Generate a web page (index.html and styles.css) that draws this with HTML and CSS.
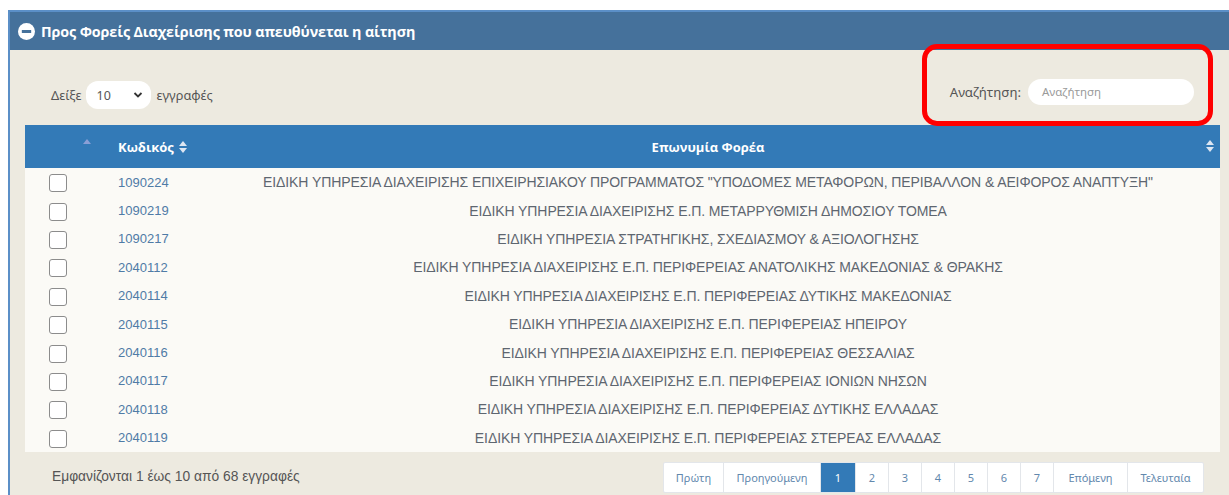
FILE: index.html
```html
<!DOCTYPE html>
<html lang="el">
<head>
<meta charset="utf-8">
<title>Φορείς Διαχείρισης</title>
<link rel="stylesheet" href="styles.css">
</head>
<body>
<section class="panel">
  <header class="panel-head">
    <svg class="collapse-icon" width="17" height="17" viewBox="0 0 16 16" aria-hidden="true">
      <circle cx="8" cy="8" r="8" fill="#ffffff"/>
      <rect x="3.6" y="6.6" width="8.8" height="2.8" fill="#45719b"/>
    </svg>
    <span class="panel-title">Προς Φορείς Διαχείρισης που απευθύνεται η αίτηση</span>
  </header>

  <div class="panel-body">
    <div class="controls">
      <label class="length">Δείξε
        <span class="select">10
          <svg width="10" height="8" viewBox="0 0 10 8" aria-hidden="true"><path d="M1.5 2 L5 5.5 L8.5 2" fill="none" stroke="#333" stroke-width="1.8"/></svg>
        </span>
        εγγραφές</label>
      <label class="search">Αναζήτηση:
        <span class="search-input">Αναζήτηση</span>
      </label>
    </div>

    <table class="grid">
      <thead>
        <tr>
          <th class="col-check"><span class="sort-up"></span></th>
          <th class="col-code">Κωδικός <span class="sort-both"></span></th>
          <th class="col-name">Επωνυμία Φορέα <span class="sort-both sort-right"></span></th>
        </tr>
      </thead>
      <tbody>
        <tr><td class="col-check"><span class="box"></span></td><td class="col-code">1090224</td><td class="col-name">ΕΙΔΙΚΗ ΥΠΗΡΕΣΙΑ ΔΙΑΧΕΙΡΙΣΗΣ ΕΠΙΧΕΙΡΗΣΙΑΚΟΥ ΠΡΟΓΡΑΜΜΑΤΟΣ "ΥΠΟΔΟΜΕΣ ΜΕΤΑΦΟΡΩΝ, ΠΕΡΙΒΑΛΛΟΝ &amp; ΑΕΙΦΟΡΟΣ ΑΝΑΠΤΥΞΗ"</td></tr>
        <tr><td class="col-check"><span class="box"></span></td><td class="col-code">1090219</td><td class="col-name">ΕΙΔΙΚΗ ΥΠΗΡΕΣΙΑ ΔΙΑΧΕΙΡΙΣΗΣ Ε.Π. ΜΕΤΑΡΡΥΘΜΙΣΗ ΔΗΜΟΣΙΟΥ ΤΟΜΕΑ</td></tr>
        <tr><td class="col-check"><span class="box"></span></td><td class="col-code">1090217</td><td class="col-name">ΕΙΔΙΚΗ ΥΠΗΡΕΣΙΑ ΣΤΡΑΤΗΓΙΚΗΣ, ΣΧΕΔΙΑΣΜΟΥ &amp; ΑΞΙΟΛΟΓΗΣΗΣ</td></tr>
        <tr><td class="col-check"><span class="box"></span></td><td class="col-code">2040112</td><td class="col-name">ΕΙΔΙΚΗ ΥΠΗΡΕΣΙΑ ΔΙΑΧΕΙΡΙΣΗΣ Ε.Π. ΠΕΡΙΦΕΡΕΙΑΣ ΑΝΑΤΟΛΙΚΗΣ ΜΑΚΕΔΟΝΙΑΣ &amp; ΘΡΑΚΗΣ</td></tr>
        <tr><td class="col-check"><span class="box"></span></td><td class="col-code">2040114</td><td class="col-name">ΕΙΔΙΚΗ ΥΠΗΡΕΣΙΑ ΔΙΑΧΕΙΡΙΣΗΣ Ε.Π. ΠΕΡΙΦΕΡΕΙΑΣ ΔΥΤΙΚΗΣ ΜΑΚΕΔΟΝΙΑΣ</td></tr>
        <tr><td class="col-check"><span class="box"></span></td><td class="col-code">2040115</td><td class="col-name">ΕΙΔΙΚΗ ΥΠΗΡΕΣΙΑ ΔΙΑΧΕΙΡΙΣΗΣ Ε.Π. ΠΕΡΙΦΕΡΕΙΑΣ ΗΠΕΙΡΟΥ</td></tr>
        <tr><td class="col-check"><span class="box"></span></td><td class="col-code">2040116</td><td class="col-name">ΕΙΔΙΚΗ ΥΠΗΡΕΣΙΑ ΔΙΑΧΕΙΡΙΣΗΣ Ε.Π. ΠΕΡΙΦΕΡΕΙΑΣ ΘΕΣΣΑΛΙΑΣ</td></tr>
        <tr><td class="col-check"><span class="box"></span></td><td class="col-code">2040117</td><td class="col-name">ΕΙΔΙΚΗ ΥΠΗΡΕΣΙΑ ΔΙΑΧΕΙΡΙΣΗΣ Ε.Π. ΠΕΡΙΦΕΡΕΙΑΣ ΙΟΝΙΩΝ ΝΗΣΩΝ</td></tr>
        <tr><td class="col-check"><span class="box"></span></td><td class="col-code">2040118</td><td class="col-name">ΕΙΔΙΚΗ ΥΠΗΡΕΣΙΑ ΔΙΑΧΕΙΡΙΣΗΣ Ε.Π. ΠΕΡΙΦΕΡΕΙΑΣ ΔΥΤΙΚΗΣ ΕΛΛΑΔΑΣ</td></tr>
        <tr><td class="col-check"><span class="box"></span></td><td class="col-code">2040119</td><td class="col-name">ΕΙΔΙΚΗ ΥΠΗΡΕΣΙΑ ΔΙΑΧΕΙΡΙΣΗΣ Ε.Π. ΠΕΡΙΦΕΡΕΙΑΣ ΣΤΕΡΕΑΣ ΕΛΛΑΔΑΣ</td></tr>
      </tbody>
    </table>

    <div class="footer">
      <div class="info">Εμφανίζονται 1 έως 10 από 68 εγγραφές</div>
      <nav class="pager">
        <a class="pg pg-first">Πρώτη</a>
        <a class="pg pg-prev">Προηγούμενη</a>
        <a class="pg num active">1</a>
        <a class="pg num">2</a>
        <a class="pg num">3</a>
        <a class="pg num">4</a>
        <a class="pg num">5</a>
        <a class="pg num">6</a>
        <a class="pg num">7</a>
        <a class="pg pg-next">Επόμενη</a>
        <a class="pg pg-last">Τελευταία</a>
      </nav>
    </div>
  </div>

  <div class="highlight"></div>
</section>
</body>
</html>
```

FILE: styles.css
```css
html, body {
  margin: 0;
  padding: 0;
  background: #ffffff;
  overflow: hidden;
}

body {
  font-family: "Liberation Sans", Arial, sans-serif;
  color: #555555;
}

.panel {
  position: relative;
  margin: 10px 0 0 8px;
  border-top: 2px solid #5b8fc7;
  border-left: 2px solid #5b8fc7;
  background: #edeae0;
  height: 485px;
  box-sizing: border-box;
}

.panel-head {
  height: 38px;
  background: #45719b;
  display: flex;
  align-items: center;
  gap: 6px;
  padding-left: 8px;
}

.collapse-icon {
  flex: none;
}

.panel-title {
  font-family: "Open Sans", "Noto Sans", sans-serif;
  font-weight: 700;
  font-size: 14.3px;
  color: #ffffff;
  letter-spacing: -0.1px;
}

.panel-body {
  padding: 0 9px 0 15px;
}

.controls {
  height: 75px;
  display: flex;
  justify-content: space-between;
  align-items: center;
}

.length {
  display: flex;
  align-items: center;
  gap: 5px;
  margin: 15px 0 0 26px;
  font-family: "Noto Sans", sans-serif;
  font-size: 12.8px;
  color: #555555;
}

.select {
  display: flex;
  align-items: center;
  justify-content: space-between;
  width: 47px;
  height: 28px;
  padding: 0 8px 0 10px;
  border-radius: 12px;
  background: #ffffff;
  color: #555555;
  font-size: 12.5px;
}

.search {
  display: flex;
  align-items: center;
  gap: 7px;
  margin: 8px 26px 0 0;
  font-family: "Noto Sans", sans-serif;
  font-size: 13.2px;
  color: #555555;
}

.search-input {
  width: 152px;
  height: 26px;
  line-height: 26px;
  padding-left: 14px;
  border-radius: 13px;
  background: #ffffff;
  color: #9a9a9a;
  font-size: 11.5px;
}

.grid {
  width: 100%;
  border-collapse: collapse;
  table-layout: fixed;
}

.grid th {
  height: 43px;
  background: #337ab7;
  color: #ffffff;
  font-family: "Open Sans", "Noto Sans", sans-serif;
  font-weight: 700;
  font-size: 13px;
  text-align: left;
  padding: 0;
  position: relative;
}

.grid th.col-name {
  text-align: center;
}

.col-check { width: 80px; }
.col-code { width: 78px; }

.grid th.col-code {
  padding-left: 13px;
}

.sort-up {
  display: block;
  width: 0;
  height: 0;
  margin-left: 58px;
  margin-top: -8px;
  border-left: 4px solid transparent;
  border-right: 4px solid transparent;
  border-bottom: 5px solid #8a9fd6;
}

.sort-both {
  display: inline-block;
  position: relative;
  width: 8px;
  height: 12px;
  vertical-align: -1px;
  margin-left: 2px;
}

.sort-both::before,
.sort-both::after {
  content: "";
  position: absolute;
  left: 0;
  border-left: 4px solid transparent;
  border-right: 4px solid transparent;
}

.sort-both::before {
  top: 0;
  border-bottom: 5px solid #dde6f2;
}

.sort-both::after {
  bottom: 0;
  border-top: 5px solid #dde6f2;
}

.sort-right {
  position: absolute;
  right: 6px;
  top: 15px;
}

.grid td {
  height: 28.4px;
  padding: 0;
  background: #fbfaf6;
  font-size: 13px;
  vertical-align: middle;
}

.grid td.col-check {
  padding-left: 24px;
}

.box {
  display: block;
  width: 16px;
  height: 16px;
  border: 1px solid #8c8c8c;
  border-radius: 3px;
  background: #ffffff;
  margin-top: 2px;
}

.grid td.col-code {
  padding-left: 13px;
  color: #4f7ba6;
}

.grid td.col-name {
  text-align: center;
  color: #5e6670;
  font-size: 14px;
  white-space: nowrap;
  letter-spacing: -0.1px;
}

.footer {
  height: 44px;
  display: flex;
  align-items: center;
  justify-content: space-between;
}

.info {
  margin-left: 27px;
  margin-top: 6px;
  font-size: 13.8px;
  color: #555555;
}

.pager {
  display: flex;
  margin: 8px 16px 0 0;
  height: 29px;
  background: #ffffff;
  border: 1px solid #e3e6ea;
  border-radius: 2px;
}

.pg {
  display: flex;
  align-items: center;
  justify-content: center;
  font-family: "Noto Sans", sans-serif;
  font-size: 11px;
  color: #6288ad;
  border-left: 1px solid #e3e6ea;
}

.pg:first-child { border-left: none; }

.pg-first { width: 59px; }
.pg-prev { width: 96px; }
.num { width: 32px; }
.pg-next { width: 73px; }
.pg-last { width: 75px; }

.pg.active {
  background: #337ab7;
  color: #ffffff;
  width: 34px;
}

/* red outline drawn over the search area */
.highlight {
  position: absolute;
  left: 912px;
  top: 32px;
  width: 281px;
  height: 72px;
  border: 5px solid #ff0000;
  border-radius: 15px;
  pointer-events: none;
}
```
